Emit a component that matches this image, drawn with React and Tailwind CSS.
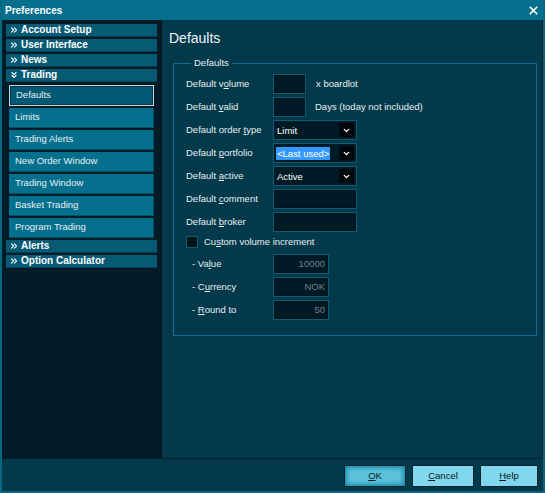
import React from 'react';
import { ChevronsRight, ChevronsDown, ChevronDown, X } from 'lucide-react';

const font = { fontFamily: '"Liberation Sans", Arial, sans-serif' };

function Header({ label, open }) {
  const Icon = open ? ChevronsDown : ChevronsRight;
  return (
    <div className="h-[13px] shrink-0 flex items-center gap-[2px] pl-[3px] bg-[#065a74] border-b border-[#033f52] text-white text-[10px] font-bold leading-none">
      <Icon size={10} strokeWidth={2.6} />
      <span>{label}</span>
    </div>
  );
}

function SubItem({ label, active }) {
  return (
    <div
      className={`shrink-0 mx-[3px] flex items-center pl-[6px] text-[9.5px] text-[#e6eef1] ${
        active
          ? 'h-[21px] mt-[1px] bg-[#035874] border border-[#c9d2d6] shadow-[inset_0_0_0_1px_#0a3a4a]'
          : 'h-[20px] bg-[#05708e] border-b border-r border-[#024e66]'
      }`}
    >
      {label}
    </div>
  );
}

function Field({ w = 'w-[33px]', value, muted }) {
  return (
    <div className={`${w} h-[20px] border border-[#0b5d76] bg-[#011b26] shadow-[inset_0_0_0_1px_#00131b] flex items-center justify-end pr-[3px] text-[9.5px] ${muted ? 'text-[#6f8088]' : 'text-white'}`}>
      {value}
    </div>
  );
}

function Select({ value, highlight }) {
  return (
    <div className="w-[84px] h-[20px] border border-[#0b5d76] bg-[#011b26] flex items-stretch p-[2px]">
      <div className="flex-1 flex items-center">
        <span className={`text-[9.5px] px-[1px] leading-[13px] ${highlight ? 'bg-[#3399ff] text-white' : 'text-white'}`}>{value}</span>
      </div>
      <div className="w-[15px] bg-[#00080c] flex items-center justify-center text-white">
        <ChevronDown size={9} strokeWidth={3.5} />
      </div>
    </div>
  );
}

function Row({ children, label, indent }) {
  return (
    <div className="h-[20px] flex items-center">
      <div className={`w-[87px] text-[9.5px] text-[#e6eef1] ${indent ? 'pl-[6px]' : ''}`}>{label}</div>
      {children}
    </div>
  );
}

const U = ({ children }) => <span className="underline underline-offset-1">{children}</span>;

function Button({ children, primary, w }) {
  return (
    <div
      className={`${w} h-[22px] flex items-center justify-center text-[9.5px] text-[#0a1a20] border border-[#06232d] ${
        primary
          ? 'bg-[#5cc2db] shadow-[inset_0_0_4px_2px_#1c8aa8]'
          : 'bg-[#80d7ee]'
      }`}
    >
      {children}
    </div>
  );
}

export default function App() {
  return (
    <div style={font} className="w-[545px] h-[493px] bg-[#023a4c] flex flex-col border-l-2 border-r-2 border-b-2 border-[#0a6784] overflow-hidden select-none">
      {/* Title bar */}
      <div className="h-[20px] shrink-0 bg-[#05708e] flex items-center justify-between -mx-[2px] pl-[5px] pr-[5px]">
        <span className="text-white text-[10px] font-bold">Preferences</span>
        <X size={13} strokeWidth={3.2} color="white" />
      </div>

      {/* Body */}
      <div className="h-[439px] shrink-0 flex border-b border-[#001f2a]">
        {/* Nav */}
        <div className="w-[160px] bg-[#011c27] pt-[4px] px-[4px] flex flex-col gap-[2px] border-r border-[#00141c]">
          <Header label="Account Setup" />
          <Header label="User Interface" />
          <Header label="News" />
          <Header label="Trading" open />
          <SubItem label="Defaults" active />
          <SubItem label="Limits" />
          <SubItem label="Trading Alerts" />
          <SubItem label="New Order Window" />
          <SubItem label="Trading Window" />
          <SubItem label="Basket Trading" />
          <SubItem label="Program Trading" />
          <Header label="Alerts" />
          <Header label="Option Calculator" />
        </div>

        {/* Content */}
        <div className="flex-1 pl-[7px] pr-[5px] border-r border-[#001f2a]">
          <div className="text-[14px] text-[#eef4f6] pt-[10px] leading-[17px]">Defaults</div>
          <fieldset className="mt-[10px] ml-[4px] border border-[#0b6f8d] pl-[12px] pr-[10px] pt-[5px] pb-[15px] flex flex-col">
            <legend className="ml-[5px] px-[3px] text-[9.5px] text-[#e6eef1] leading-[12px]">Defaults</legend>
            <div className="flex flex-col gap-[3px]">
              <Row label={<>Default v<U>o</U>lume</>}>
                <Field />
                <span className="ml-[10px] text-[9.5px] text-[#e6eef1]">x boardlot</span>
              </Row>
              <Row label={<>Default <U>v</U>alid</>}>
                <Field />
                <span className="ml-[9px] text-[9.5px] text-[#e6eef1]">Days (today not included)</span>
              </Row>
              <Row label={<>Default order <U>t</U>ype</>}>
                <Select value="Limit" />
              </Row>
              <Row label={<>Default <U>p</U>ortfolio</>}>
                <Select value="<Last used>" highlight />
              </Row>
              <Row label={<>Default <U>a</U>ctive</>}>
                <Select value="Active" />
              </Row>
              <Row label={<>Default <U>c</U>omment</>}>
                <Field w="w-[84px]" />
              </Row>
              <Row label={<>Default <U>b</U>roker</>}>
                <Field w="w-[84px]" />
              </Row>
            </div>
            <div className="mt-[4px] h-[12px] flex items-center gap-[6px]">
              <div className="w-[12px] h-[12px] bg-[#00131b] border border-[#0b5d76]" />
              <span className="text-[9.5px] text-[#e6eef1]">Cu<U>s</U>tom volume increment</span>
            </div>
            <div className="mt-[6px] flex flex-col gap-[3px]">
              <Row indent label={<>- Va<U>l</U>ue</>}>
                <Field w="w-[56px]" value="10000" muted />
              </Row>
              <Row indent label={<>- C<U>u</U>rrency</>}>
                <Field w="w-[56px]" value="NOK" muted />
              </Row>
              <Row indent label={<>- <U>R</U>ound to</>}>
                <Field w="w-[56px]" value="50" muted />
              </Row>
            </div>
          </fieldset>
        </div>
      </div>

      {/* Footer */}
      <div className="flex-1 flex justify-end items-start gap-[6px] pt-[6px] pr-[5px]">
        <Button primary w="w-[62px]"><U>O</U>K</Button>
        <Button w="w-[62px]"><U>C</U>ancel</Button>
        <Button w="w-[58px]"><U>H</U>elp</Button>
      </div>
    </div>
  );
}
